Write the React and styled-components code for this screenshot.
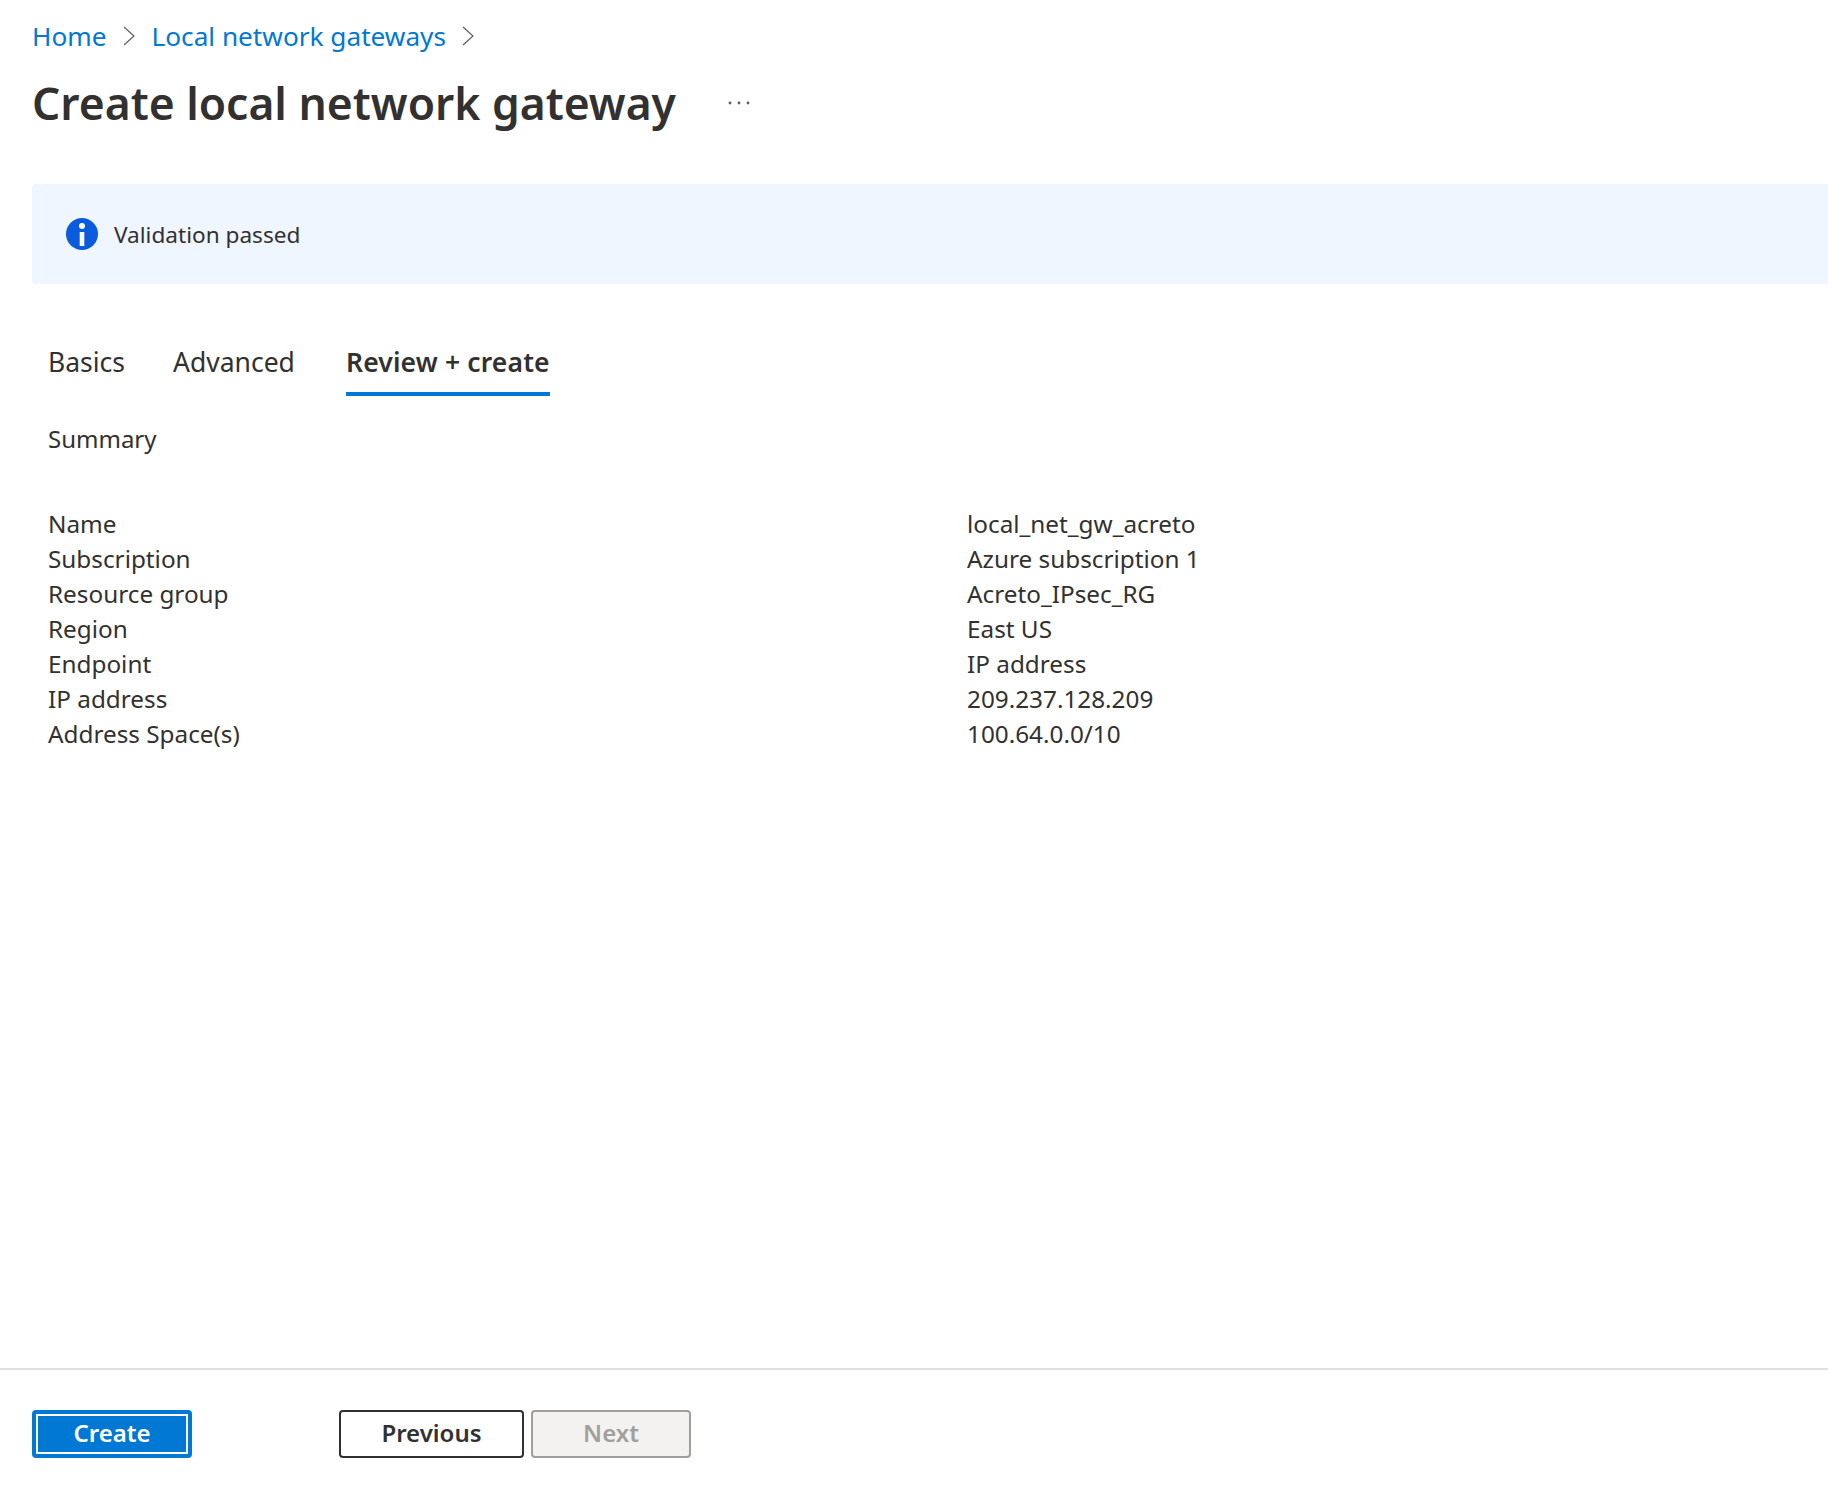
import React from 'react'
import styled, { createGlobalStyle } from 'styled-components'

const GlobalStyle = createGlobalStyle`
    html, body {
        margin: 0;
        padding: 0;
        background: #fff;
    }
    body {
        font-family: 'Noto Sans', 'Open Sans', sans-serif;
        color: #323130;
    }
`

const Page = styled.div`
    display: flex;
    flex-direction: column;
    height: 1500px;
    overflow: hidden;
`

const Breadcrumbs = styled.nav`
    display: flex;
    align-items: center;
    height: 36px;
    margin: 18px 0 0 32px;
    font-size: 26.2px;
`

const Crumb = styled.a`
    color: #0078d4;
    text-decoration: none;
`

const Chevron = styled.svg`
    width: 12px;
    height: 20px;
    margin: 0 17px 0 16px;
    flex: none;
`

const TitleRow = styled.div`
    display: flex;
    align-items: center;
    height: 60px;
    margin: 19px 0 0 32px;
`

const Title = styled.h1`
    margin: 0;
    font-size: 44.4px;
    font-weight: 600;
    color: #323130;
`

const More = styled.svg`
    width: 22px;
    height: 4px;
    margin-left: 52px;
    flex: none;
`

const Banner = styled.div`
    display: flex;
    align-items: center;
    gap: 16px;
    height: 100px;
    margin: 51px 0 0 32px;
    padding-left: 34px;
    background: #eff6ff;
    border-radius: 4px 0 0 4px;
    font-size: 22.6px;
`

const InfoIcon = styled.svg`
    width: 32px;
    height: 32px;
    flex: none;
`

const Tabs = styled.div`
    display: grid;
    grid-template-columns: 125px 173px auto;
    justify-content: start;
    margin: 50px 0 0 48px;
    font-size: 26.5px;
`

const Tab = styled.div`
    height: 62px;
    line-height: 57px;
    box-sizing: border-box;
    font-weight: ${props => (props.$active ? 600 : 400)};
    letter-spacing: ${props => (props.$active ? '0.15px' : 'normal')};
    border-bottom: 4px solid ${props => (props.$active ? '#0078d4' : 'transparent')};
`

const Summary = styled.div`
    margin: 25px 0 0 48px;
    font-size: 24px;
    line-height: 35px;
`

const Details = styled.dl`
    display: grid;
    grid-template-columns: 919px 1fr;
    grid-auto-rows: 35px;
    margin: 50px 0 0 48px;
    font-size: 24.3px;
    line-height: 35px;

    dt, dd {
        margin: 0;
    }
`

const Footer = styled.footer`
    display: flex;
    box-sizing: border-box;
    margin-top: auto;
    height: 132px;
    padding: 40px 0 0 32px;
    border-top: 2px solid #e0e0e0;
`

const Button = styled.button`
    box-sizing: border-box;
    height: 48px;
    width: ${props => props.$width}px;
    margin-right: ${props => props.$gap || 0}px;
    padding: 0 0 4px;
    font-family: inherit;
    font-size: 24px;
    font-weight: 600;
    border-radius: 4px;
`

const PrimaryButton = styled(Button)`
    color: #fff;
    background: #0078d4;
    border: 4px solid #0078d4;
    box-shadow: inset 0 0 0 2px #fff;
`

const SecondaryButton = styled(Button)`
    color: #323130;
    background: #fff;
    border: 2px solid #323130;
`

const DisabledButton = styled(Button)`
    color: #a19f9d;
    background: #f3f2f1;
    border: 2px solid #a19f9d;
`

const rows = [
    ['Name', 'local_net_gw_acreto'],
    ['Subscription', 'Azure subscription 1'],
    ['Resource group', 'Acreto_IPsec_RG'],
    ['Region', 'East US'],
    ['Endpoint', 'IP address'],
    ['IP address', '209.237.128.209'],
    ['Address Space(s)', '100.64.0.0/10'],
]

const ChevronIcon = () => (
    <Chevron viewBox="0 0 12 20">
        <path d="M1 1l10 9-10 9" fill="none" stroke="#605e5c" strokeWidth="1.2" />
    </Chevron>
)

export default function App() {
    return (
        <Page>
            <GlobalStyle />
            <Breadcrumbs>
                <Crumb href="#">Home</Crumb>
                <ChevronIcon />
                <Crumb href="#">Local network gateways</Crumb>
                <ChevronIcon />
            </Breadcrumbs>
            <TitleRow>
                <Title>Create local network gateway</Title>
                <More viewBox="0 0 22 4">
                    <circle cx="2" cy="2" r="1.4" fill="#605e5c" />
                    <circle cx="11" cy="2" r="1.4" fill="#605e5c" />
                    <circle cx="20" cy="2" r="1.4" fill="#605e5c" />
                </More>
            </TitleRow>
            <Banner>
                <InfoIcon viewBox="0 0 32 32">
                    <circle cx="16" cy="16" r="16" fill="#0b5cdc" />
                    <circle cx="16" cy="8" r="3" fill="#fff" />
                    <rect x="13.7" y="14" width="4.6" height="14" fill="#fff" />
                </InfoIcon>
                Validation passed
            </Banner>
            <Tabs>
                <Tab>Basics</Tab>
                <Tab>Advanced</Tab>
                <Tab $active>Review + create</Tab>
            </Tabs>
            <Summary>Summary</Summary>
            <Details>
                {rows.map(([label, value]) => (
                    <React.Fragment key={label}>
                        <dt>{label}</dt>
                        <dd>{value}</dd>
                    </React.Fragment>
                ))}
            </Details>
            <Footer>
                <PrimaryButton $width={160} $gap={147}>Create</PrimaryButton>
                <SecondaryButton $width={185} $gap={7}>Previous</SecondaryButton>
                <DisabledButton $width={160}>Next</DisabledButton>
            </Footer>
        </Page>
    )
}
